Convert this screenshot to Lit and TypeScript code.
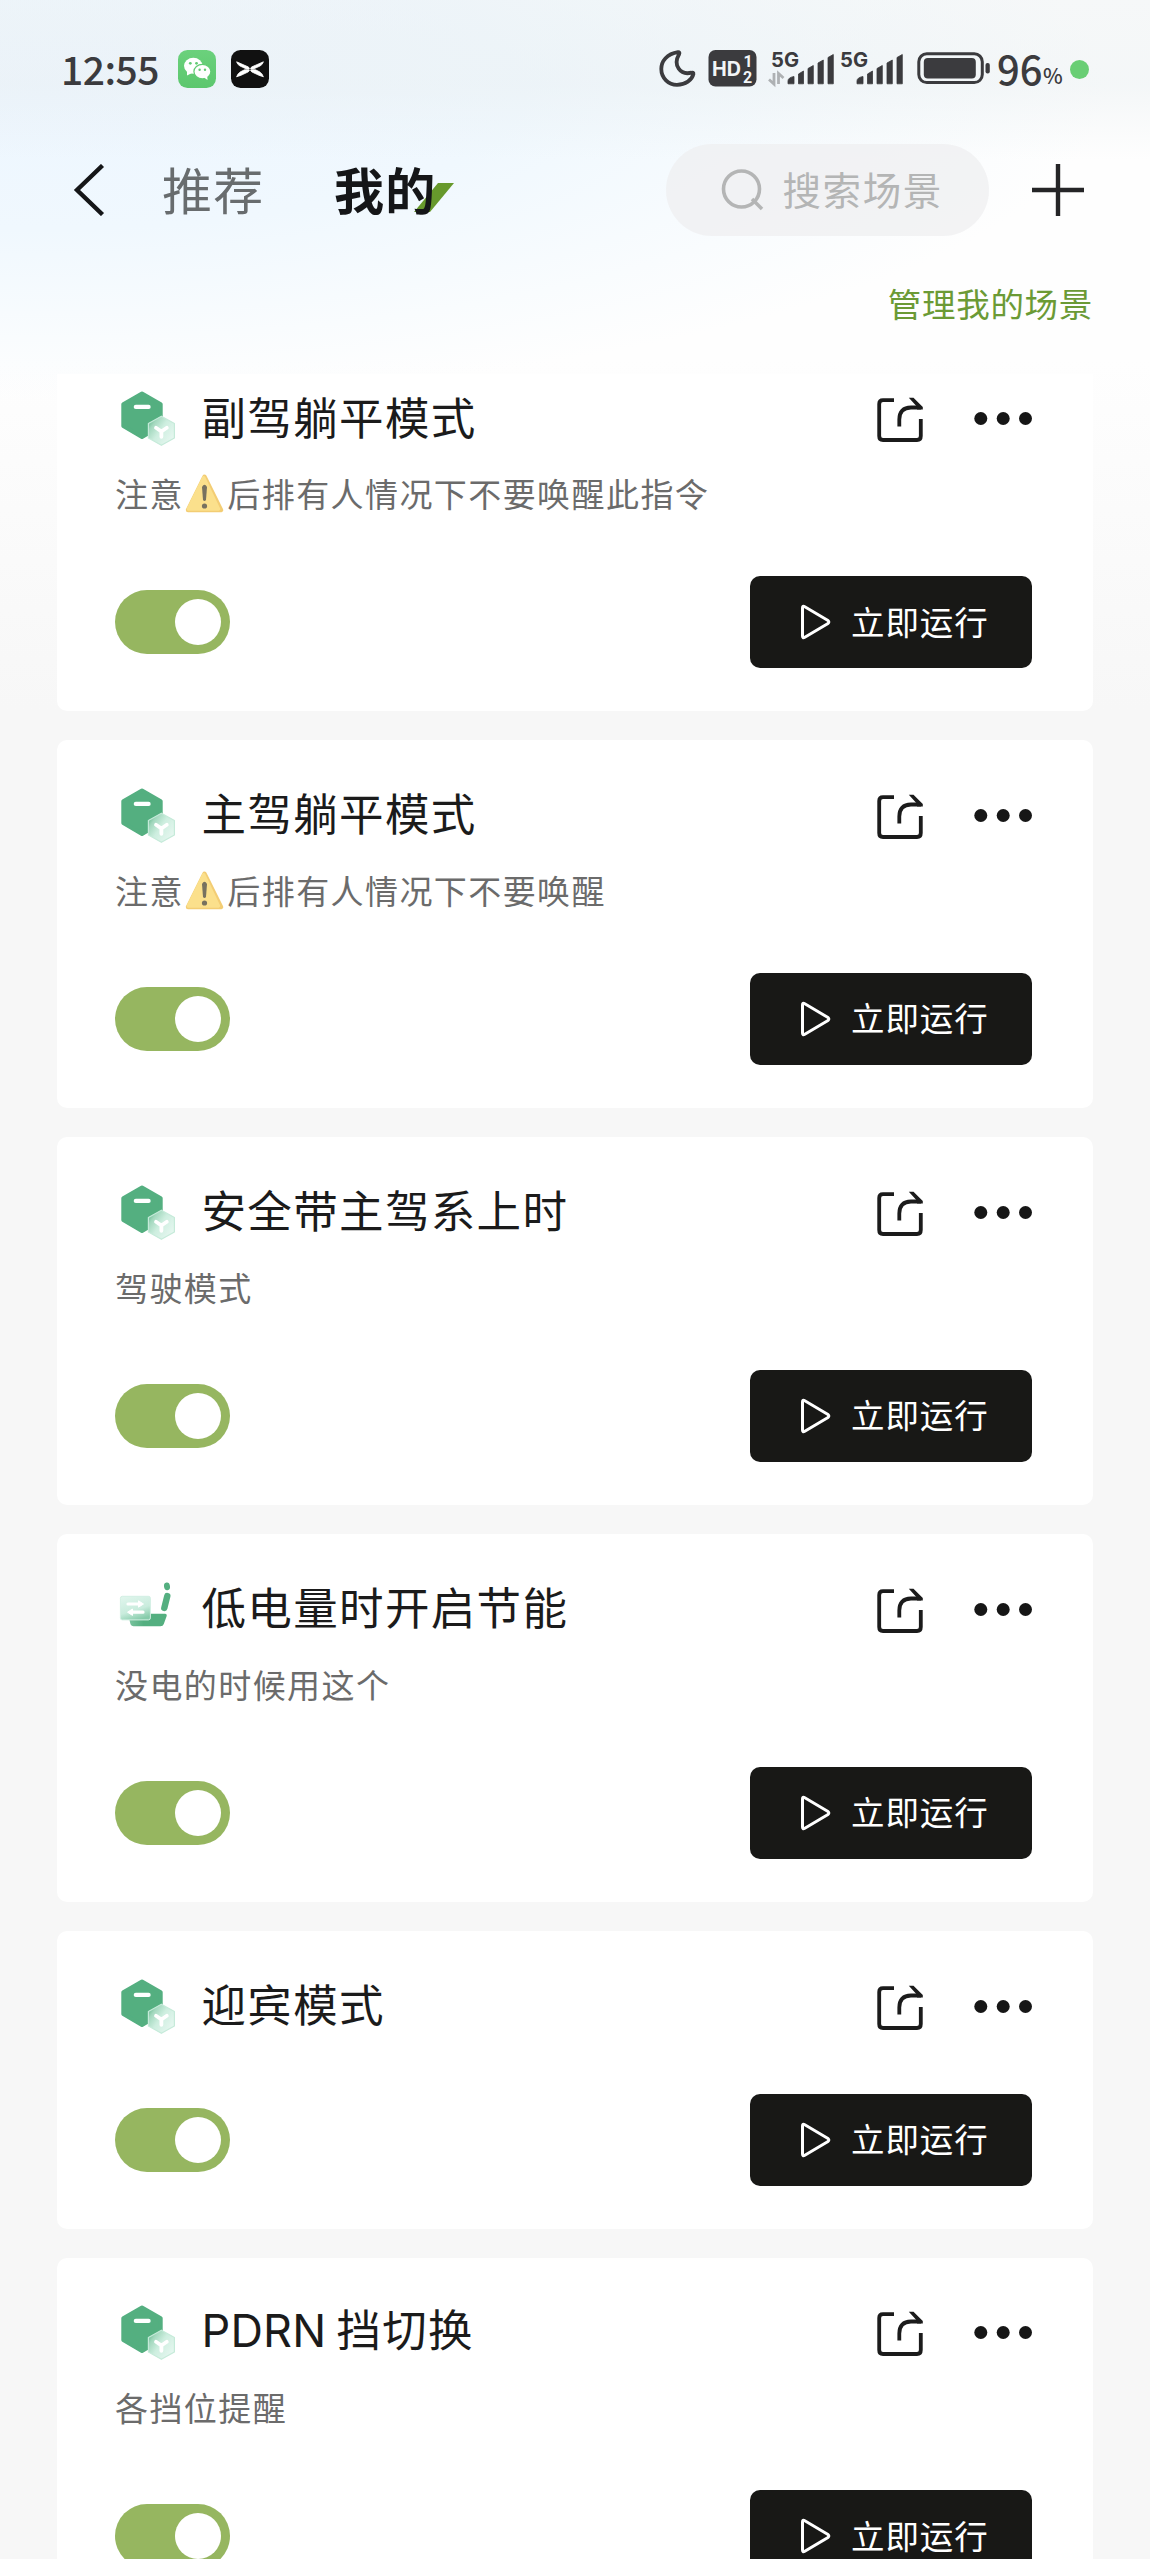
import { LitElement, html, svg, css, nothing } from "lit";
import { customElement, property } from "lit/decorators.js";

const FONT = css`"Noto Sans CJK SC", "Noto Sans", sans-serif`;

interface Scene {
  title: string;
  latin?: string;
  lead?: string;
  desc?: string;
  icon: "hex" | "seat";
}

const SCENES: Scene[] = [
  { title: "副驾躺平模式", lead: "注意", desc: "后排有人情况下不要唤醒此指令", icon: "hex" },
  { title: "主驾躺平模式", lead: "注意", desc: "后排有人情况下不要唤醒", icon: "hex" },
  { title: "安全带主驾系上时", desc: "驾驶模式", icon: "hex" },
  { title: "低电量时开启节能", desc: "没电的时候用这个", icon: "seat" },
  { title: "迎宾模式", icon: "hex" },
  { latin: "PDRN", title: "挡切换", desc: "各挡位提醒", icon: "hex" },
];

const hexIcon = html`<svg width="60" height="60" viewBox="0.8 0 60 60">
  <defs>
    <linearGradient id="g" x1="0" y1="0.15" x2="0.9" y2="0.85">
      <stop offset="0" stop-color="#62b88c" />
      <stop offset="0.2" stop-color="#a3d8be" />
      <stop offset="0.5" stop-color="#cdeedf" />
      <stop offset="1" stop-color="#e6f7f0" />
    </linearGradient>
  </defs>
  <path d="M25.8 6.500 L44.500 17.200 V39 L25.800 50 L7.100 39 V17.200 Z" fill="#54af80" stroke="#54af80" stroke-width="4" stroke-linejoin="round" />
  <rect x="17.500" y="17.800" width="17" height="4.200" rx="2.100" fill="#fff" />
  <path d="M45.200 29.200 L58.200 36.500 V51 L45.200 58.300 L32.200 51 V36.500 Z" fill="url(#g)" stroke="#c5ead9" stroke-width="1.200" stroke-linejoin="round" />
  <path d="M39.800 40.800 L45.200 44.500 L50.600 40.800 M45.200 44.500 V49.800" fill="none" stroke="#fff" stroke-width="3.800" stroke-linecap="round" stroke-linejoin="round" />
</svg>`;

const seatIcon = html`<svg width="60" height="60" viewBox="0 0 60 60">
  <defs>
    <linearGradient id="s" x1="0.2" y1="0" x2="0.6" y2="1">
      <stop offset="0" stop-color="#dff5ec" />
      <stop offset="0.6" stop-color="#c9ecdd" />
      <stop offset="1" stop-color="#86cbaa" />
    </linearGradient>
    <linearGradient id="b" x1="0" y1="0" x2="1" y2="0">
      <stop offset="0" stop-color="#7cc5a1" />
      <stop offset="0.4" stop-color="#54af80" />
    </linearGradient>
  </defs>
  <ellipse cx="50" cy="8.300" rx="3" ry="3.900" fill="#54af80" transform="rotate(-8 50 8.300)" />
  <path d="M50.300 18 L47.300 30" stroke="#54af80" stroke-width="6.400" stroke-linecap="round" />
  <path d="M11 35.700 H48 Q50.300 35.700 49.600 38.200 L46.800 46 Q46 48.300 43.500 48.300 H16.500 Q14.500 48.300 13.500 46.300 Z" fill="url(#b)" />
  <rect x="3.400" y="18.300" width="30" height="23.600" rx="2" fill="url(#s)" stroke="#d3efe4" stroke-width="1" />
  <path d="M11 26 H23 M14 34.200 H26" stroke="#fff" stroke-width="3.200" stroke-linecap="round" />
  <path d="M21.500 22.800 L26.500 26 L21.500 29.200 Z M15.500 31 L10.500 34.200 L15.500 37.400 Z" fill="#fff" stroke="#fff" stroke-width="1" stroke-linejoin="round" />
</svg>`;

const warnIcon = html`<svg width="39" height="40" viewBox="0 0 39 40">
  <path d="M19.500 2.800 L36 36 H3 Z" fill="#f3cd74" stroke="#f3cd74" stroke-width="4.400" stroke-linejoin="round" />
  <path d="M18.700 3.800 L33.500 35 H3.300 Z" fill="#fbe08c" stroke="#fbe08c" stroke-width="3.400" stroke-linejoin="round" />
  <path d="M17 13 Q19.500 8.500 22 13 L21 26 Q19.500 28 18 26 Z" fill="#77715f" />
  <circle cx="19.500" cy="32" r="2.600" fill="#77715f" />
</svg>`;

const chatApp = html`<svg class="app" width="38" height="38" viewBox="0 0 38 38">
  <defs>
    <linearGradient id="w" x1="0" y1="0" x2="0" y2="1">
      <stop offset="0" stop-color="#6bd17c" /><stop offset="1" stop-color="#5cc76e" />
    </linearGradient>
  </defs>
  <rect width="38" height="38" rx="9.500" fill="url(#w)" />
  <ellipse cx="15.300" cy="15.800" rx="9.300" ry="8" fill="#fff" />
  <path d="M9 20 L9 25.500 L15 22.500 Z" fill="#fff" />
  <ellipse cx="24.400" cy="21.600" rx="8.500" ry="7.300" fill="#fff" stroke="#62cb74" stroke-width="1.200" />
  <path d="M26 27.500 L29.500 30 L29.200 26 Z" fill="#fff" />
  <g fill="#62cb74"><circle cx="12.300" cy="13.300" r="1.400" /><circle cx="18.500" cy="13.300" r="1.400" /><circle cx="21.600" cy="19.700" r="1.200" /><circle cx="27" cy="19.700" r="1.200" /></g>
</svg>`;

const carApp = html`<svg class="app" width="38" height="38" viewBox="0 0 38 38">
  <rect width="38" height="38" rx="9.500" fill="#111" />
  <g fill="#fff" stroke="#fff" stroke-width="0.800" stroke-linejoin="round">
    <path d="M5.600 11.800 Q6.500 14.800 9 16 L15.500 19 H18.200 Q18.800 17.800 17 16.800 Z" />
    <path d="M32.400 11.800 Q31.500 14.800 29 16 L22.500 19 H19.800 Q19.200 17.800 21 16.800 Z" />
    <path d="M5.600 26.800 Q6.800 23.400 9.500 21.800 L13.500 19.800 H18.200 Q18.800 21 17 22 L10 25.300 Z" />
    <path d="M32.400 26.800 Q31.200 23.400 28.500 21.800 L24.500 19.800 H19.800 Q19.200 21 21 22 L28 25.300 Z" />
  </g>
</svg>`;

const signalBars = (x: number) => svg`<g fill="#3b3b3e" stroke="#3b3b3e" stroke-width="0.8" stroke-linejoin="round">
  <path d=${`M${x} 34.800 V32 Q${x} 28.500 ${x + 6} 27.500 V34.800 Z`} />
  <path d=${`M${x + 10.5} 34.800 V25 L${x + 15.5} 22 V34.800 Z`} />
  <path d=${`M${x + 20} 34.800 V19.500 L${x + 25.3} 16.500 V34.800 Z`} />
  <path d=${`M${x + 30} 34.800 V14 L${x + 35.3} 11 V34.800 Z`} />
  <path d=${`M${x + 40} 34.800 V8.500 L${x + 45.3} 5.500 V34.800 Z`} />
</g>`;

@customElement("status-bar")
class StatusBar extends LitElement {
  static styles = css`
    :host {
      display: flex;
      flex: none;
      align-items: center;
      height: 138px;
      padding: 0 61px 0 61px;
      box-sizing: border-box;
      font-family: ${FONT};
      color: #3b3b3e;
    }
    svg { display: block; flex: none; overflow: visible; }
    .time { font-size: 39px; font-weight: 500; line-height: 48px; letter-spacing: -0.500px; width: 117px; flex: none; padding-bottom: 2px; }
    .app { margin-right: 15px; }
    .right { display: flex; align-items: center; margin-left: auto; }
    .pct { font-size: 40px; font-weight: 500; line-height: 48px; margin-left: 6px; width: 46px; padding-bottom: 2px; }
    .sign { font-size: 21px; line-height: 24px; margin-top: 12px; width: 22px; font-weight: 500; }
    .dot { width: 19px; height: 19px; border-radius: 50%; background: #69ce74; margin-left: 5px; }
    .cell { font-family: Inter, sans-serif; font-weight: 700; }
    .sim { font-family: Roboto, sans-serif; font-weight: 700; }
  `;

  render() {
    return html`
      <span class="time">12:55</span>
      ${chatApp} ${carApp}
      <div class="right">
        <svg width="332" height="40" viewBox="0 0 332 40">
          <path d="M19 3.200 C8 5 2.300 12 2.300 20 C2.300 29 9.500 35.800 18 35.800 C26.500 35.800 33 31 34.400 25 C34.600 23.800 33.500 23.300 32.500 23.700 C21.500 26.500 13.500 16.500 20.200 5 C20.800 3.800 20.200 3 19 3.200 Z" fill="none" stroke="#3b3b3e" stroke-width="3.800" stroke-linejoin="round" />
          <rect x="49.500" y="1" width="48" height="36.500" rx="7" fill="#3b3b3e" />
          <g fill="#f2f5f7">
            <text class="cell" x="53" y="27.300" font-size="20" textLength="29" lengthAdjust="spacingAndGlyphs">HD</text>
            <text class="sim" x="84.500" y="17.800" font-size="16">1</text>
            <text class="sim" x="84" y="34" font-size="16">2</text>
          </g>
          <g fill="#3b3b3e">
            <text class="cell" x="112" y="17.700" font-size="20" textLength="28" lengthAdjust="spacingAndGlyphs">5G</text>
            <text class="cell" x="181" y="17.700" font-size="20" textLength="28" lengthAdjust="spacingAndGlyphs">5G</text>
          </g>
          <path d="M115 24 V35 L110 30.500 M119.500 35 V24.500 L124.500 29" stroke="#aeb1b3" stroke-width="2.800" fill="none" />
          ${signalBars(129)} ${signalBars(198)}
          <rect x="259.800" y="4.800" width="63.500" height="28.800" rx="8" fill="none" stroke="#3b3b3e" stroke-width="3" />
          <rect x="264.800" y="9" width="52" height="20.400" rx="4" fill="#3b3b3e" />
          <rect x="326.500" y="14" width="4.300" height="10.500" rx="2" fill="#3b3b3e" />
        </svg>
        <span class="pct">96</span><span class="sign">%</span><i class="dot"></i>
      </div>
    `;
  }
}

@customElement("scene-card")
class SceneCard extends LitElement {
  @property({ attribute: false }) scene!: Scene;

  static styles = css`
    :host {
      display: block;
      box-sizing: border-box;
      flex: none;
      padding: 43.900px 61px 43px 57.500px;
      background: #fff;
      border-radius: 10px;
      font-family: ${FONT};
    }
    svg { display: block; flex: none; }
    .head { display: flex; align-items: center; height: 60px; padding-left: 2.500px; }
    .title { flex: 1; margin: -3px 0 0 24.500px; font-size: 44.500px; letter-spacing: 1.350px; line-height: 60px; color: #1b1b1b; white-space: nowrap; }
    .latin { font-family: Inter, sans-serif; font-size: 45px; letter-spacing: 0.200px; margin-right: 10px; }
    .share { margin: 6px 47px 0 0; }
    .desc { display: flex; align-items: center; height: 44px; padding: 24px 0 2px 0.500px; font-size: 33px; letter-spacing: 1.420px; line-height: 44px; color: #6b6b6b; white-space: nowrap; }
    .warn { margin: 2px 3px 0 1.500px; }
    .foot { display: flex; align-items: center; justify-content: space-between; margin-top: 59px; }
    .toggle { display: flex; align-items: center; justify-content: flex-end; box-sizing: border-box; width: 115px; height: 64px; padding-right: 8.500px; border-radius: 32px; background: #96b660; }
    .knob { width: 46px; height: 46px; border-radius: 50%; background: #fff; }
    .run { display: flex; align-items: center; box-sizing: border-box; width: 282px; height: 92px; padding-left: 50.500px; border-radius: 10px; background: #181816; color: #fff; font-size: 33.500px; letter-spacing: 0.900px; line-height: 44px; white-space: nowrap; }
    .run span { padding-bottom: 3px; }
    .play { margin-right: 20px; }
  `;

  render() {
    const s = this.scene;
    return html`
      <div class="head">
        ${s.icon === "hex" ? hexIcon : seatIcon}
        <span class="title">${s.latin ? html`<span class="latin">${s.latin}</span>` : nothing}${s.title}</span>
        <svg class="share" width="50" height="50" viewBox="0 0 50 50">
          <g fill="none" stroke="#1b1b1b" stroke-width="3.800" stroke-linejoin="round">
            <path d="M19 5.200 H8 Q4.200 5.200 4.200 9 V41 Q4.200 45 8 45 H42 Q45.800 45 45.800 41 V24" />
            <path d="M24.300 31.500 V24.500 Q24.300 12.500 36 12.500 H46" />
          </g>
          <path d="M33.800 2.800 H38.500 L47.800 12 V14.400 H42 V11.800 Z" fill="#1b1b1b" />
        </svg>
        <svg width="60" height="20" viewBox="-0.500 0 60 20" fill="#161616">
          <circle cx="8.300" cy="11.500" r="6.500" /><circle cx="30.700" cy="11.500" r="6.500" /><circle cx="53" cy="11.500" r="6.500" />
        </svg>
      </div>
      ${s.desc
        ? html`<div class="desc">
            ${s.lead ? html`<span>${s.lead}</span><span class="warn">${warnIcon}</span>` : nothing}<span>${s.desc}</span>
          </div>`
        : nothing}
      <div class="foot">
        <div class="toggle"><i class="knob"></i></div>
        <div class="run">
          <svg class="play" width="31" height="36" viewBox="0 0 31 36">
            <path d="M2.500 4 Q2.500 1.500 4.800 2.800 L28 16.500 Q29.500 18 28 19.500 L4.800 33.200 Q2.500 34.500 2.500 32 Z" fill="none" stroke="#fff" stroke-width="3" stroke-linejoin="round" />
          </svg>
          <span>立即运行</span>
        </div>
      </div>
    `;
  }
}

@customElement("app-root")
class AppRoot extends LitElement {
  static styles = css`
    :host {
      display: flex;
      flex-direction: column;
      width: 1150px;
      height: 2559px;
      overflow: hidden;
      background:
        linear-gradient(180deg, rgba(234, 239, 241, 0.4) 0, rgba(232, 238, 240, 0.45) 85px, rgba(255, 255, 255, 0) 160px),
        linear-gradient(180deg, rgba(247, 247, 247, 0) 0, rgba(247, 247, 247, 0) 360px, #f7f7f7 710px),
        radial-gradient(ellipse 1060px 310px at 4% 90px, #edf6ff 0, #f0f8fe 45%, #f9fcfe 80%, #fefefe 100%);
      font-family: ${FONT};
    }
    svg { display: block; flex: none; }
    .nav { display: flex; align-items: center; height: 104px; padding-left: 73px; }
    .tab { font-size: 50px; letter-spacing: 1.300px; line-height: 70px; color: #686c6e; white-space: nowrap; }
    .first { margin: -5px 0 0 56px; width: 172px; }
    .active { display: grid; color: #151618; font-weight: 700; width: 332px; }
    .active > * { grid-area: 1 / 1; }
    .mark { align-self: end; margin: 0 0 11px 79.500px; }
    .label { z-index: 1; margin-top: -5px; }
    .search { display: flex; align-items: center; box-sizing: border-box; width: 323px; height: 92px; padding-left: 54px; border-radius: 46px; background: rgba(238, 239, 240, 0.72); font-size: 38.500px; letter-spacing: 1.600px; color: #b4b5b5; white-space: nowrap; }
    .search span { padding-bottom: 4px; }
    .glass { margin-right: 16.500px; }
    .plus { margin-left: 41.500px; }
    .manage { height: 132px; box-sizing: border-box; padding: 36px 57px 0 0; text-align: right; font-size: 33.500px; letter-spacing: 0.700px; line-height: 50px; color: #6b9a35; }
    .list { display: flex; flex-direction: column; gap: 29px; flex: 1; min-height: 0; overflow: hidden; padding: 0 57.500px 0 57px; }
    .list scene-card:first-child { margin-top: -30.900px; }
  `;

  render() {
    return html`
      <status-bar></status-bar>
      <div class="nav">
        <svg width="33" height="52" viewBox="0 0 33 52"><path d="M29.500 1.500 L4 26 L29.500 50.500" fill="none" stroke="#151618" stroke-width="4.400" /></svg>
        <span class="tab first">推荐</span>
        <span class="tab active">
          <svg class="mark" width="40" height="29" viewBox="0 0 40 29"><path d="M24 0 H40 L16 29 H0 Z" fill="#67992c" /></svg>
          <span class="label">我的</span>
        </span>
        <div class="search">
          <svg class="glass" width="46" height="46" viewBox="0 0 46 46" fill="none" stroke="#b4b5b5" stroke-width="3.600"><circle cx="21.500" cy="22" r="18" /><path d="M32 32 L42 42" /></svg>
          <span>搜索场景</span>
        </div>
        <svg class="plus" width="54" height="54" viewBox="0 0 54 54"><path d="M27 1 V53 M1 27 H53" stroke="#252527" stroke-width="4.400" /></svg>
      </div>
      <div class="manage">管理我的场景</div>
      <div class="list">${SCENES.map((s) => html`<scene-card .scene=${s}></scene-card>`)}</div>
    `;
  }
}
